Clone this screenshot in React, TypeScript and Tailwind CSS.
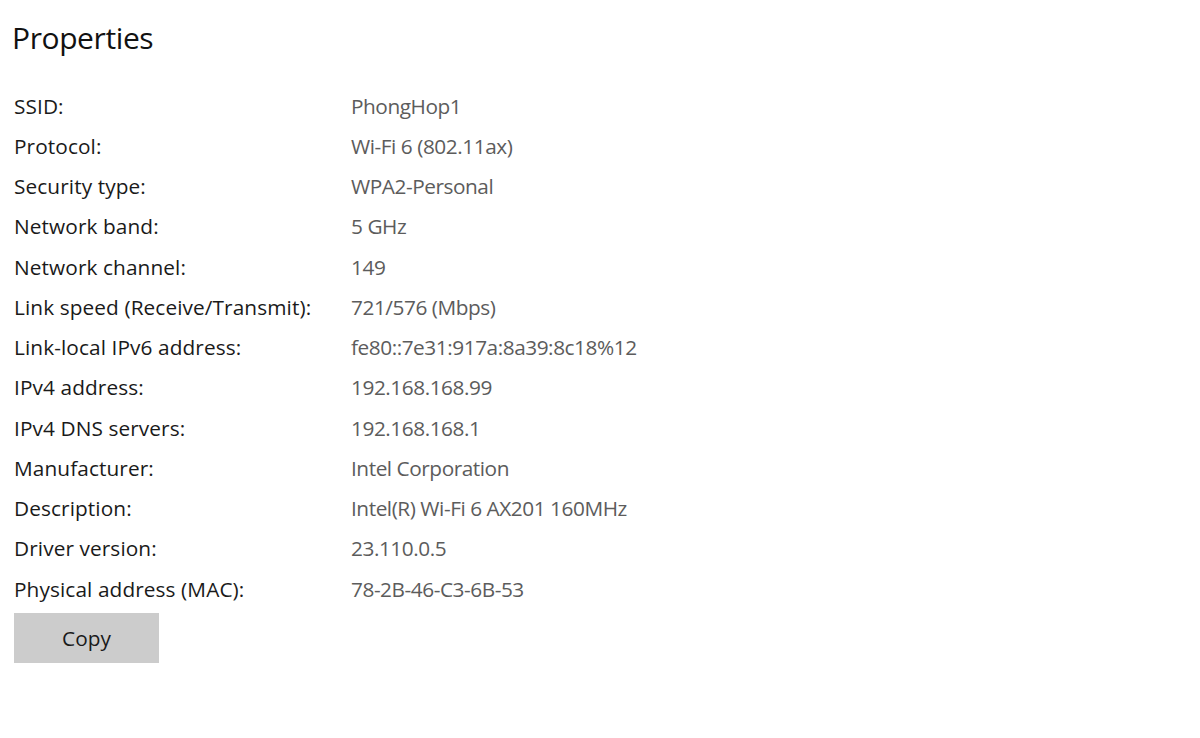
import React from 'react';

const rows: [string, string][] = [
  ['SSID:', 'PhongHop1'],
  ['Protocol:', 'Wi-Fi 6 (802.11ax)'],
  ['Security type:', 'WPA2-Personal'],
  ['Network band:', '5 GHz'],
  ['Network channel:', '149'],
  ['Link speed (Receive/Transmit):', '721/576 (Mbps)'],
  ['Link-local IPv6 address:', 'fe80::7e31:917a:8a39:8c18%12'],
  ['IPv4 address:', '192.168.168.99'],
  ['IPv4 DNS servers:', '192.168.168.1'],
  ['Manufacturer:', 'Intel Corporation'],
  ['Description:', 'Intel(R) Wi-Fi 6 AX201 160MHz'],
  ['Driver version:', '23.110.0.5'],
  ['Physical address (MAC):', '78-2B-46-C3-6B-53'],
];

export default function App() {
  return (
    <div className="w-[1200px] h-[738px] bg-white font-['Open_Sans',sans-serif] overflow-hidden">
      <div className="pl-[12px] pt-[16px]">
        <h1 className="text-[30px] leading-[44px] text-[#111] tracking-[-0.4px]">Properties</h1>
        <div className="mt-[26px] pl-[2px]">
          {rows.map(([label, value]) => (
            <div key={label} className="flex h-[40.25px] items-center text-[20.8px]">
              <div className="w-[337px] shrink-0 text-[#1a1a1a] tracking-[0.1px]">{label}</div>
              <div className="text-[#5c5c5c] tracking-[-0.45px]">{value}</div>
            </div>
          ))}
          <button className="mt-[4px] w-[145px] h-[50px] bg-[#cccccc] text-[20.8px] text-[#1a1a1a]">
            Copy
          </button>
        </div>
      </div>
    </div>
  );
}
